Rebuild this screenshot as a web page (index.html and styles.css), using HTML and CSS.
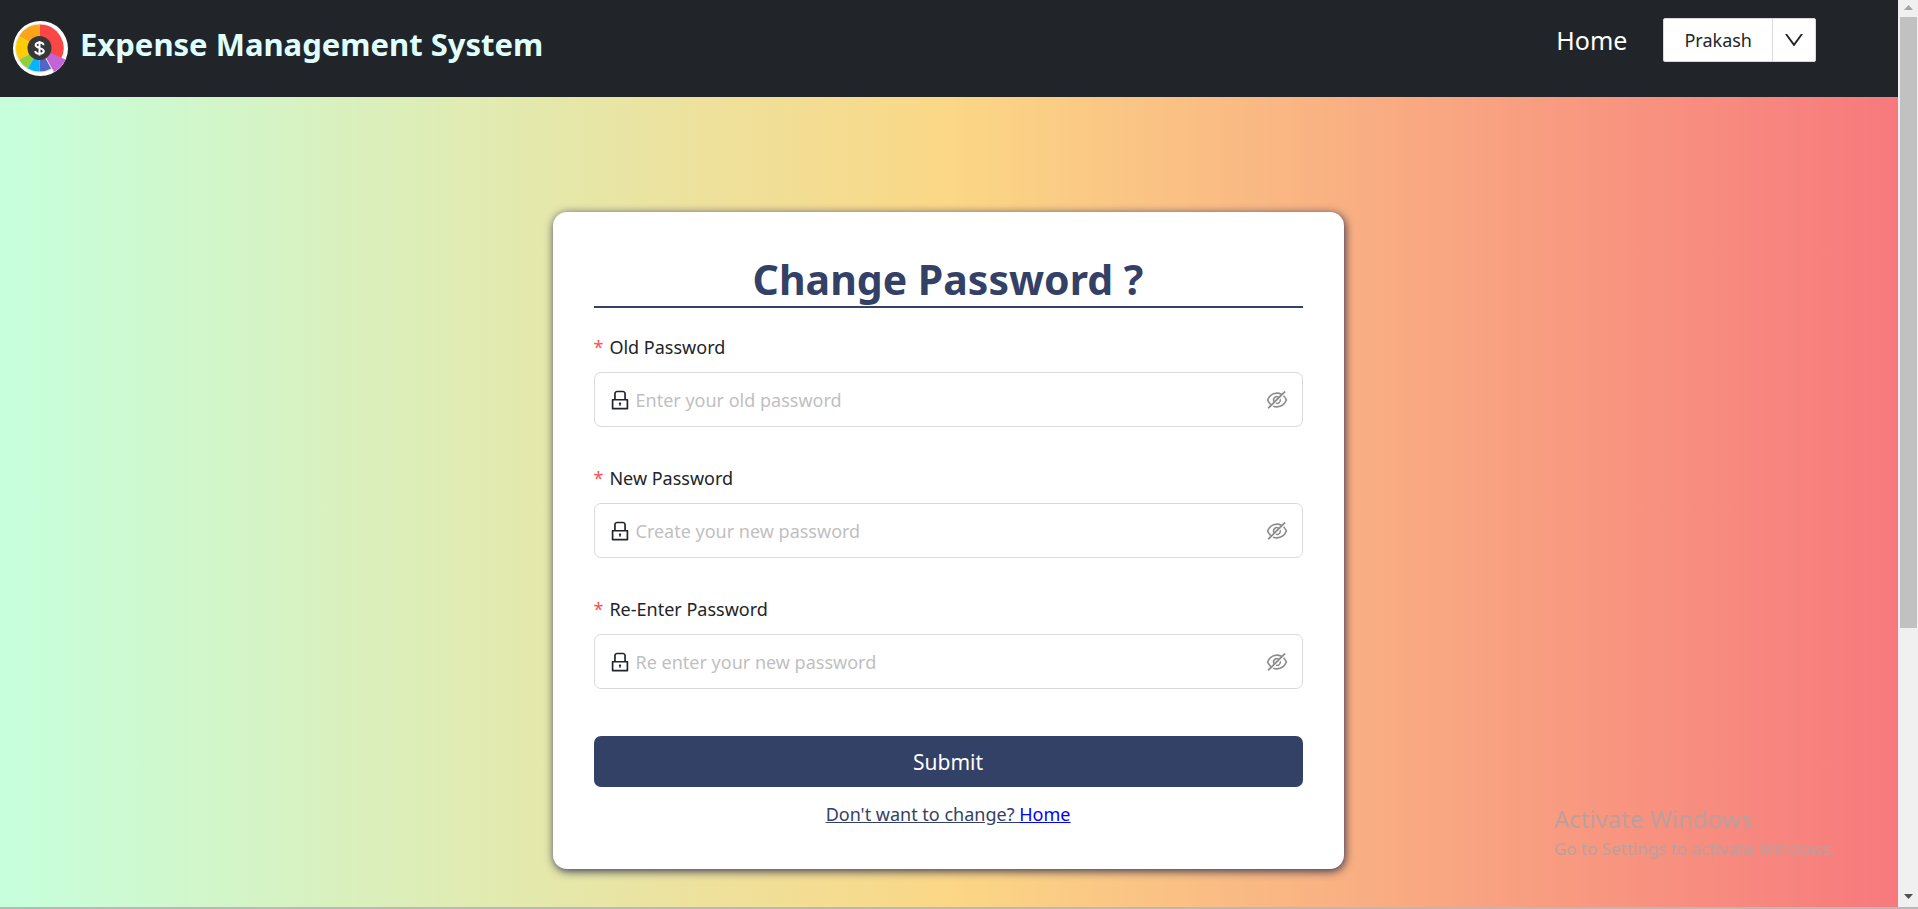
FILE: index.html
```html
<!DOCTYPE html>
<html lang="en">
<head>
<meta charset="utf-8">
<title>Expense Management System</title>
<link rel="stylesheet" href="styles.css">
</head>
<body>
<svg class="sprite" aria-hidden="true">
  <symbol id="lock" viewBox="0 0 1024 1024"><path d="M832 464h-68V240c0-70.700-57.300-128-128-128H388c-70.700 0-128 57.300-128 128v224h-68c-17.700 0-32 14.300-32 32v384c0 17.700 14.300 32 32 32h640c17.700 0 32-14.300 32-32V496c0-17.700-14.300-32-32-32zM332 240c0-30.900 25.100-56 56-56h248c30.900 0 56 25.100 56 56v224H332V240zm460 600H232V536h560v304zM484 701v53c0 4.400 3.600 8 8 8h40c4.400 0 8-3.600 8-8v-53a48.010 48.010 0 10-56 0z"/></symbol>
  <symbol id="eye-off" viewBox="0 0 1024 1024"><path d="M942.2 486.2Q889.47 375.11 816.7 305l-50.88 50.88C807.31 395.53 843.45 447.4 874.7 512 791.5 684.2 673.4 766 512 766q-72.67 0-133.87-22.38L323 798.75Q408 838 512 838q288.3 0 430.2-300.3a60.29 60.29 0 000-51.5zm-63.57-320.64L836 122.88a8 8 0 00-11.32 0L715.31 232.2Q624.86 186 512 186q-288.3 0-430.2 300.3a60.3 60.3 0 000 51.5q56.69 119.4 136.5 191.41L112.48 835a8 8 0 000 11.31L155.17 889a8 8 0 0011.31 0l712.15-712.12a8 8 0 000-11.32zM149.3 512C232.6 339.8 350.7 258 512 258c54.54 0 104.13 9.36 149.12 28.39l-70.3 70.3a176 176 0 00-238.13 238.13l-83.42 83.42C223.1 637.49 183.3 582.28 149.3 512zm246.7 0a112.11 112.11 0 01146.2-106.69L401.31 546.2A112 112 0 01396 512z"/><path d="M508 624c-3.46 0-6.87-.16-10.25-.47l-52.82 52.82a176.09 176.09 0 00227.42-227.42l-52.82 52.82c.31 3.38.47 6.79.47 10.25a111.94 111.94 0 01-112 112z"/></symbol>
  <symbol id="down" viewBox="0 0 1024 1024"><path d="M884 256h-75c-5.100 0-9.900 2.500-12.900 6.600L512 654.200 227.900 262.600c-3-4.100-7.800-6.600-12.900-6.600h-75c-6.500 0-10.300 7.400-6.500 12.700l352.600 486.100c12.800 17.600 39 17.600 51.700 0l352.600-486.100c3.900-5.300.1-12.700-6.400-12.700z"/></symbol>
</svg>
<div class="page">
  <div class="content">
    <header class="navbar">
      <a class="brand" href="#">
        <svg class="logo" viewBox="0 0 55 55" aria-hidden="true">
          <circle cx="27.500" cy="27.500" r="27.500" fill="#fff"/>
          <circle cx="26.500" cy="27" r="24" fill="none" stroke="#e3e3e3" stroke-width="1"/>
          <path d="M26.500 27V3.500A23.500 23.500 0 0 1 47.500 38.500z" fill="#fb4646"/>
          <path d="M26.500 27L6.100 15.300A23.500 23.500 0 0 1 26.500 3.500z" fill="#fca518"/>
          <path d="M26.500 27L6.100 38.700A23.500 23.500 0 0 1 6.100 15.300z" fill="#fecb07"/>
          <path d="M26.500 27L14.800 47.400A23.500 23.500 0 0 1 6.100 38.700z" fill="#8fcf3c"/>
          <path d="M26.500 27V50.500A23.500 23.500 0 0 1 14.800 47.400z" fill="#05b5fb"/>
          <path d="M26.500 27L38.200 47.400A23.500 23.500 0 0 1 26.500 50.500z" fill="#5465ca"/>
          <path d="M28 28L52.500 38.500A27 27 0 0 1 41 51z" fill="#c264d8"/>
          <circle cx="26.500" cy="27" r="12" fill="#373737"/>
          <path d="M30.500 24.300C30.500 20.800 22.600 20.600 22.600 24.100S30.800 26.600 30.800 30.200 22.300 33.600 22.300 30M26.500 20V34.500" fill="none" stroke="#fff" stroke-width="2"/>
        </svg>
        <span>Expense Management System</span>
      </a>
      <nav class="menu">
        <a class="home" href="#">Home</a>
        <div class="split">
          <button type="button" class="user">Prakash</button>
          <button type="button" class="more" aria-label="More"><svg class="icon"><use href="#down"/></svg></button>
        </div>
      </nav>
    </header>
    <main class="main">
      <form class="card">
        <h1 class="title">Change Password ?</h1>
        <div class="field">
          <label for="old">Old Password</label>
          <div class="box"><svg class="icon"><use href="#lock"/></svg><input id="old" type="password" placeholder="Enter your old password"><button type="button" class="eye" aria-label="Show password"><svg class="icon"><use href="#eye-off"/></svg></button></div>
        </div>
        <div class="field">
          <label for="new">New Password</label>
          <div class="box"><svg class="icon"><use href="#lock"/></svg><input id="new" type="password" placeholder="Create your new password"><button type="button" class="eye" aria-label="Show password"><svg class="icon"><use href="#eye-off"/></svg></button></div>
        </div>
        <div class="field">
          <label for="again">Re-Enter Password</label>
          <div class="box"><svg class="icon"><use href="#lock"/></svg><input id="again" type="password" placeholder="Re enter your new password"><button type="button" class="eye" aria-label="Show password"><svg class="icon"><use href="#eye-off"/></svg></button></div>
        </div>
        <button type="submit" class="submit">Submit</button>
        <p class="back">Don't want to change? <a href="#">Home</a></p>
      </form>
    </main>
  </div>
  <div class="scrollbar" aria-hidden="true">
    <svg class="arrow" viewBox="0 0 20 17"><path d="M6 10h9L10.500 5z" fill="#a3a3a3"/></svg>
    <div class="track"><div class="thumb"></div></div>
    <svg class="arrow" viewBox="0 0 20 17"><path d="M6 4h9L10.500 9z" fill="#505050"/></svg>
  </div>
</div>
<aside class="watermark">
  <p class="watermark-title">Activate Windows</p>
  <p class="watermark-text">Go to Settings to activate Windows.</p>
</aside>
</body>
</html>
```
FILE: styles.css
```css
* {
  box-sizing: border-box;
}

body {
  margin: 0;
  font-family: "Noto Sans", "Open Sans", sans-serif;
  font-size: 18px;
  line-height: 28px;
  color: #212529;
}

button,
input {
  font: inherit;
  color: inherit;
}

.sprite {
  position: absolute;
  width: 0;
  height: 0;
}

.icon {
  display: block;
  flex: none;
  width: 24px;
  height: 24px;
  fill: currentColor;
}

.page {
  display: flex;
  height: 100vh;
  border-bottom: 2px solid #b9b9b9;
}

.content {
  flex: 1;
  display: flex;
  flex-direction: column;
  background: linear-gradient(to right, #c6ffdd, #fbd786, #f7797d);
}

.navbar {
  display: flex;
  justify-content: space-between;
  align-items: flex-start;
  padding: 18px 82px 18px 13px;
  min-height: 97px;
  background: #212529;
}

.brand {
  display: flex;
  gap: 12px;
  padding-top: 3px;
  font-size: 31px;
  line-height: 46px;
  font-weight: 700;
  color: #e0ffff;
  text-decoration: none;
}

.logo {
  width: 55px;
  height: 55px;
}

.menu {
  display: flex;
  align-items: center;
  gap: 36px;
}

.home {
  font-size: 25px;
  line-height: 36px;
  color: #fff;
  text-decoration: none;
}

.split {
  display: flex;
  height: 44px;
  border: 1px solid #d9d9d9;
  border-radius: 2px;
  background: #fff;
}

.user,
.more {
  border: 0;
  background: none;
}

.user {
  padding: 0 20px;
}

.more {
  padding: 0 9px;
  border-left: 1px solid #d9d9d9;
}

.main {
  flex: 1;
  display: flex;
  justify-content: center;
  align-items: flex-start;
  padding: 115px 2px 0 0;
}

.card {
  width: 100%;
  max-width: 791px;
  padding: 41px;
  border-radius: 14px;
  background: #fff;
  box-shadow: 1px 2px 10px #2f2f4f;
}

.title {
  margin: 0 0 25px;
  border-bottom: 2px solid #344166;
  font-size: 41px;
  line-height: 53px;
  text-align: center;
  color: #344166;
}

.field {
  margin-bottom: 37px;
}

.field label {
  display: block;
  margin-bottom: 11px;
}

.field label::before {
  content: "*";
  margin-right: 6px;
  color: #ff4d4f;
}

.box {
  display: flex;
  align-items: center;
  gap: 4px;
  height: 55px;
  padding: 0 13px;
  border: 1px solid #d9d9d9;
  border-radius: 7px;
}

.box input {
  flex: 1;
  min-width: 0;
  padding: 0;
  border: 0;
  outline: 0;
  background: none;
}

.box input::placeholder {
  color: #bfbfbf;
}

.eye {
  padding: 0;
  border: 0;
  background: none;
  color: #8c8c8c;
}

.submit {
  display: block;
  width: 100%;
  height: 51px;
  margin-top: 47px;
  border: 0;
  border-radius: 7px;
  background: #344166;
  font-size: 21px;
  color: #fff;
}

.back {
  margin: 13px 0 0;
  text-align: center;
  text-decoration: underline;
  color: #344166;
}

.back a {
  color: #00f;
}

.scrollbar {
  display: flex;
  flex-direction: column;
  width: 20px;
  background: #f0f0f0;
}

.arrow {
  display: block;
  height: 17px;
}

.track {
  flex: 1;
  padding: 0 1px 0 2px;
}

.thumb {
  height: 70%;
  background: #c1c1c1;
}

.watermark {
  position: fixed;
  right: 82px;
  bottom: 46px;
  color: #b8a09c;
}

.watermark p {
  margin: 0;
}

.watermark .watermark-title {
  font-size: 24px;
  line-height: 32px;
}

.watermark .watermark-text {
  font-size: 17px;
}
```
